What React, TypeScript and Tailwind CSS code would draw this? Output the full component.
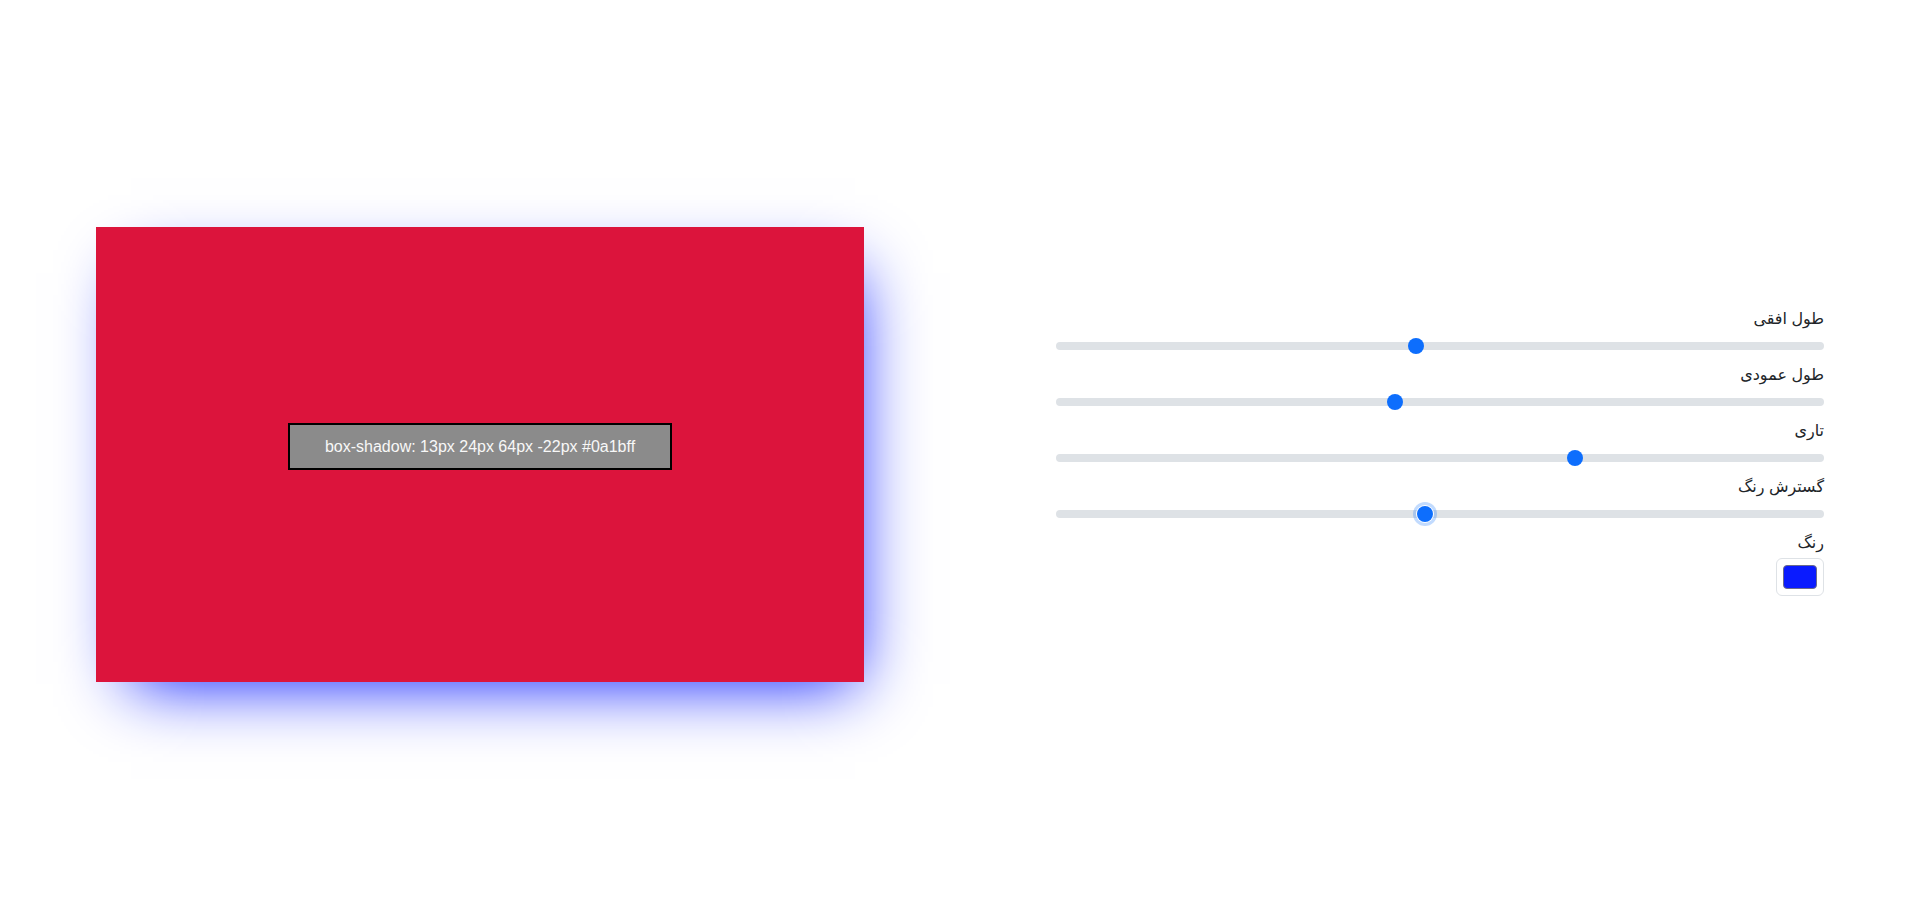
import React, { useState } from "react";

type Control = { id: string; label: string; value: number };

const initialControls: Control[] = [
  { id: "x", label: "طول افقی", value: 468 },
  { id: "y", label: "طول عمودی", value: 440 },
  { id: "blur", label: "تاری", value: 679 },
  { id: "spread", label: "گسترش رنگ", value: 480 },
];

const rangeBase =
  "block w-full h-6 p-0 bg-transparent appearance-none cursor-pointer focus:outline-none " +
  "[&::-webkit-slider-runnable-track]:h-2 [&::-webkit-slider-runnable-track]:rounded-2xl [&::-webkit-slider-runnable-track]:bg-[#dee2e6] " +
  "[&::-webkit-slider-thumb]:appearance-none [&::-webkit-slider-thumb]:w-4 [&::-webkit-slider-thumb]:h-4 [&::-webkit-slider-thumb]:-mt-1 " +
  "[&::-webkit-slider-thumb]:rounded-full [&::-webkit-slider-thumb]:border-0 [&::-webkit-slider-thumb]:bg-[#0d6efd]";

const labelCls = "pt-[5px] mb-[3px] text-right text-base leading-6 text-[#212529]";

const App: React.FC = () => {
  const [controls, setControls] = useState<Control[]>(initialControls);
  const [color, setColor] = useState("#0a1bff");

  const update = (id: string, value: number) =>
    setControls((prev) => prev.map((c) => (c.id === id ? { ...c, value } : c)));

  return (
    <div className="grid grid-cols-2 w-full h-[908px] bg-white font-['Segoe_UI','Liberation_Sans','DejaVu_Sans',sans-serif]">
      {/* preview */}
      <div className="flex items-center justify-center">
        <div className="flex items-center justify-center w-[768px] h-[455px] pb-[15px] bg-[#dc143c] shadow-[13px_24px_64px_-22px_#0a1bff]">
          <div className="border-2 border-black bg-[#8b8b8b] px-[35px] py-3 text-base leading-[19px] text-[#f8f8f8] font-['Liberation_Sans',Arial,sans-serif]">
            box-shadow: 13px 24px 64px -22px #0a1bff
          </div>
        </div>
      </div>

      {/* controls */}
      <div className="flex items-center justify-center pb-[10px]">
        <div className="w-[768px] flex flex-col">
          {controls.map((c, i) => (
            <div key={c.id} className="flex flex-col">
              <label className={labelCls} dir="rtl">
                {c.label}
              </label>
              <input
                type="range"
                min={0}
                max={1000}
                value={c.value}
                onChange={(e) => update(c.id, Number(e.target.value))}
                className={
                  rangeBase +
                  (i === 3
                    ? " [&::-webkit-slider-thumb]:shadow-[0_0_0_1px_#fff,0_0_0_4px_rgba(13,110,253,0.25)]"
                    : "")
                }
              />
            </div>
          ))}
          <label className={labelCls} dir="rtl">
            رنگ
          </label>
          <input
            type="color"
            value={color}
            onChange={(e) => setColor(e.target.value)}
            className="self-end w-12 h-[38px] p-1.5 bg-white border border-[#dee2e6] rounded-md cursor-pointer appearance-none [&::-webkit-color-swatch-wrapper]:p-0 [&::-webkit-color-swatch]:rounded-[4px] [&::-webkit-color-swatch]:border [&::-webkit-color-swatch]:border-[#6b6b8a]"
          />
        </div>
      </div>
    </div>
  );
};

export default App;
